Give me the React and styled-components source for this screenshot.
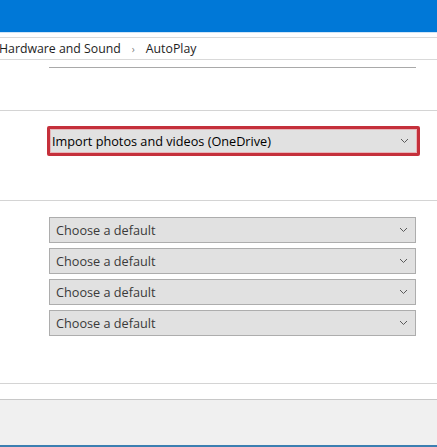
import React from 'react';
import styled, { createGlobalStyle } from 'styled-components';

const GlobalStyle = createGlobalStyle`
  html, body {
    margin: 0;
    padding: 0;
    background: #ffffff;
  }
  body {
    font-family: 'Open Sans', 'Noto Sans', sans-serif;
    overflow: hidden;
  }
`;

const Window = styled.div`
  display: flex;
  flex-direction: column;
  width: 437px;
  height: 447px;
  overflow: hidden;
  background: #ffffff;
`;

const TitleBar = styled.div`
  height: 32px;
  flex-shrink: 0;
  background: #0078d7;
  border-bottom: 1px solid #cfe4f6;
`;

const AddressBar = styled.div`
  display: flex;
  align-items: center;
  gap: 11px;
  height: 21px;
  margin-top: 4px;
  border-top: 1px solid #d9d9d9;
  border-bottom: 1px solid #d9d9d9;
  font-size: 12.3px;
  color: #1e1e1e;
  white-space: nowrap;
`;

const Crumb = styled.span`
  margin-left: ${(p) => (p.first ? '-1px' : '0')};
`;

const Sep = styled.span`
  font-size: 10px;
  color: #808080;
`;

const Rule = styled.div`
  height: 1px;
  background: ${(p) => p.color || '#d4d4d4'};
  margin-top: ${(p) => p.top}px;
  margin-left: ${(p) => p.inset || 0}px;
  margin-right: ${(p) => (p.inset ? 21 : 0)}px;
  flex-shrink: 0;
`;

const Section = styled.div`
  display: flex;
  flex-direction: column;
  gap: 5px;
  margin-top: ${(p) => p.top}px;
  padding-left: ${(p) => p.left}px;
  padding-right: ${(p) => p.right}px;
`;

const Select = styled.div`
  display: flex;
  align-items: center;
  justify-content: space-between;
  box-sizing: border-box;
  height: ${(p) => (p.highlight ? 30 : 26)}px;
  padding: ${(p) => (p.highlight ? '0 8px 0 2px' : '0 7px 0 6px')};
  background: #e1e1e1;
  border: ${(p) => (p.highlight ? '3px solid #c5303b' : '1px solid #adadad')};
  border-radius: ${(p) => (p.highlight ? '2px' : '0')};
  box-shadow: ${(p) => (p.highlight ? 'inset 0 0 0 1px #e8b4b8' : 'none')};
  font-size: 12.7px;
  color: ${(p) => (p.highlight ? '#000000' : '#3a3a3a')};
  white-space: nowrap;
`;

const Footer = styled.div`
  flex: 1;
  margin-top: 15px;
  background: #f0f0f0;
  border-top: 1px solid #c8c8c8;
  border-bottom: 2px solid #3c7fb1;
`;

const Chevron = () => (
  <svg width="9" height="6" viewBox="0 0 9 6">
    <path d="M1 1 L4.5 4.5 L8 1" fill="none" stroke="#5a5a5a" strokeWidth="1" />
  </svg>
);

const defaults = ['Choose a default', 'Choose a default', 'Choose a default', 'Choose a default'];

export default function App() {
  return (
    <Window>
      <GlobalStyle />
      <TitleBar />
      <AddressBar>
        <Crumb first>Hardware and Sound</Crumb>
        <Sep>&#8250;</Sep>
        <Crumb>AutoPlay</Crumb>
      </AddressBar>
      <Rule top={7} inset={49} color="#a9a9a9" />
      <Rule top={42} />
      <Section top={15} left={47} right={17}>
        <Select highlight>
          <span>Import photos and videos (OneDrive)</span>
          <Chevron />
        </Select>
      </Section>
      <Rule top={44} />
      <Section top={16} left={49} right={21}>
        {defaults.map((label, i) => (
          <Select key={i}>
            <span>{label}</span>
            <Chevron />
          </Select>
        ))}
      </Section>
      <Rule top={47} />
      <Footer />
    </Window>
  );
}
